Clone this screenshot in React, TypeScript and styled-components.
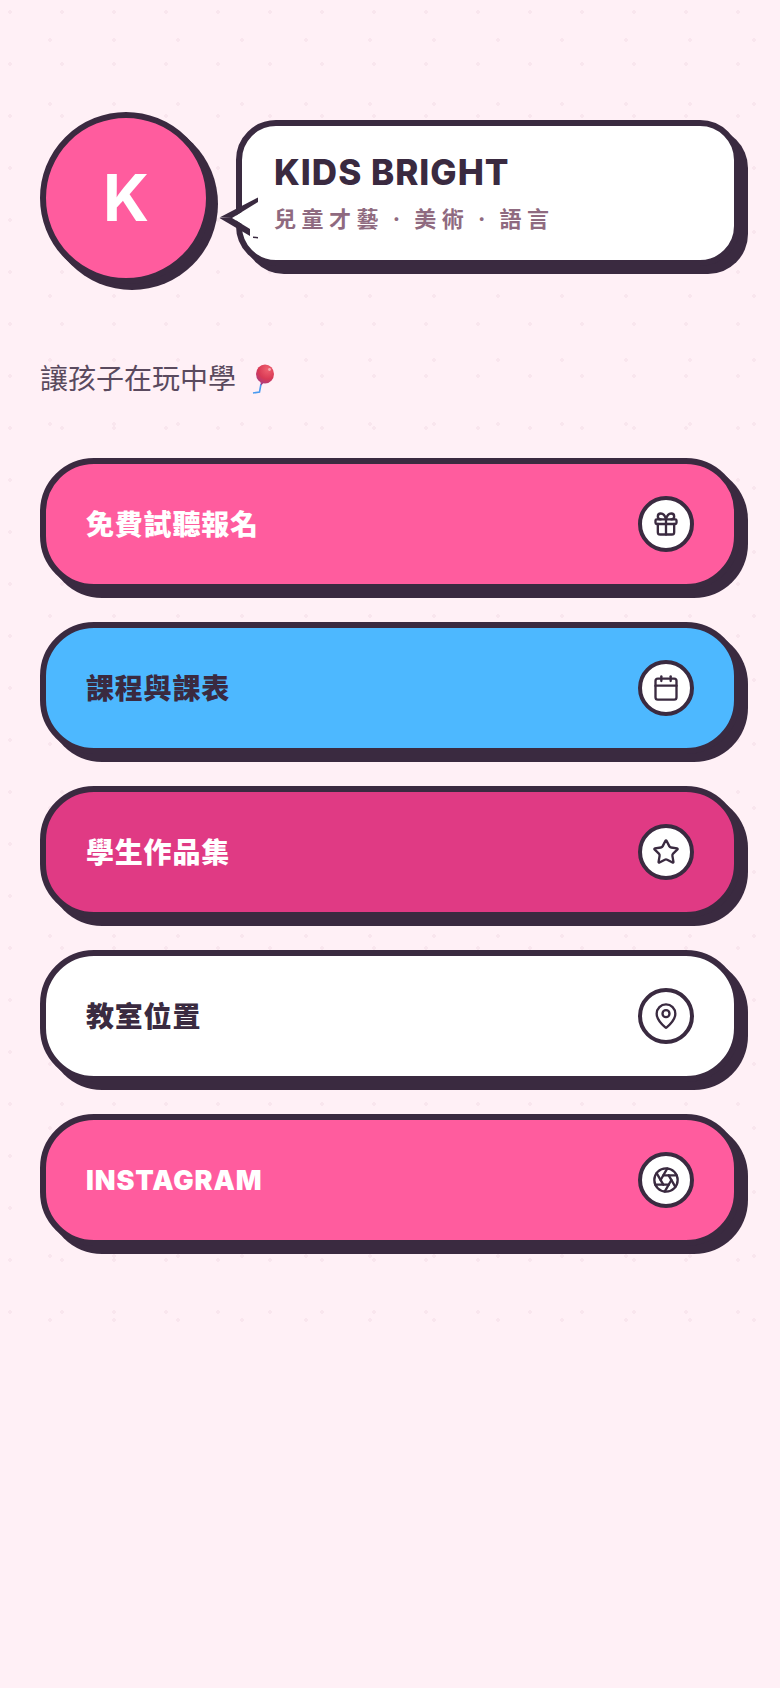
import React from "react";
import styled, { createGlobalStyle } from "styled-components";
import { Gift, Calendar, Star, MapPin, Aperture } from "lucide-react";

const DARK = "#3a2a40";

const GlobalStyle = createGlobalStyle`
  html, body {
    margin: 0;
    padding: 0;
    min-height: 1688px;
    background: #fff0f6;
  }
`;

const links = [
  { label: "免費試聽報名", bg: "#ff5c9e", color: "#ffffff", Icon: Gift },
  { label: "課程與課表", bg: "#4db8ff", color: DARK, Icon: Calendar },
  { label: "學生作品集", bg: "#e03a84", color: "#ffffff", Icon: Star },
  { label: "教室位置", bg: "#ffffff", color: DARK, Icon: MapPin },
  { label: "INSTAGRAM", bg: "#ff5c9e", color: "#ffffff", Icon: Aperture, latin: true },
];

export default function App() {
  return (
    <Page>
      <GlobalStyle />
      <Header>
        <Avatar>K</Avatar>
        <Bubble>
          <Tail width="40" height="44" viewBox="0 0 40 44">
            <polygon points="14,22 40,6 40,40 32,33" fill="#ffffff" />
            <polygon points="1.5,21.5 40,1.5 40,6 14,22" fill={DARK} />
            <polygon points="1.5,22 14,22 32,33 32,40" fill={DARK} />
            <polygon points="35,40.5 40,41 40,42.5 35,42" fill={DARK} />
          </Tail>
          <Title>KIDS BRIGHT</Title>
          <Subtitle>兒童才藝 · 美術 · 語言</Subtitle>
        </Bubble>
      </Header>

      <Tagline>
        讓孩子在玩中學
        <Balloon width="24" height="30" viewBox="0 0 24 30">
          <defs>
            <radialGradient id="balloon" cx="0.65" cy="0.25" r="0.85">
              <stop offset="0" stopColor="#f0606f" />
              <stop offset="0.6" stopColor="#d93a55" />
              <stop offset="1" stopColor="#a83a80" />
            </radialGradient>
          </defs>
          <path d="M9 20 L7.5 28 L1 29" fill="none" stroke="#4a9bf0" strokeWidth="1.6" />
          <ellipse cx="13" cy="10" rx="9" ry="9.6" fill="url(#balloon)" />
          <path d="M8.5 18 L11.5 19 L9 21.5 Z" fill="#a83a80" />
          <circle cx="17.5" cy="5.5" r="1.4" fill="#f7a8b0" />
        </Balloon>
      </Tagline>

      <LinkList>
        {links.map(({ label, bg, color, Icon, latin }) => (
          <LinkButton key={label} $bg={bg} $color={color}>
            <Label $latin={latin}>{label}</Label>
            <IconCircle>
              <Icon size={28} strokeWidth={2} />
            </IconCircle>
          </LinkButton>
        ))}
      </LinkList>
    </Page>
  );
}

const Page = styled.div`
  box-sizing: border-box;
  width: 780px;
  padding: 112px 40px 80px;
  font-family: "Noto Sans CJK TC", sans-serif;
  background-color: #fff0f6;
  background-image:
    radial-gradient(circle, #f9e6ee 1.6px, transparent 2px),
    radial-gradient(circle, #f9e6ee 1.6px, transparent 2px);
  background-size: 52px 52px, 64px 64px;
  background-position: -16px -14px, 18px 8px;
  background-repeat: repeat;
`;

const Header = styled.header`
  display: flex;
  align-items: flex-start;
  gap: 24px;
`;

const Avatar = styled.div`
  box-sizing: border-box;
  flex: none;
  display: flex;
  align-items: center;
  justify-content: center;
  width: 172px;
  height: 172px;
  padding-bottom: 2px;
  border: 6px solid ${DARK};
  border-radius: 50%;
  background: #ff5c9e;
  box-shadow: 6px 6px 0 ${DARK};
  color: #ffffff;
  font-family: Inter, sans-serif;
  font-size: 64px;
  font-weight: 700;
`;

const Bubble = styled.div`
  box-sizing: border-box;
  position: relative;
  flex: 1;
  height: 146px;
  margin-top: 8px;
  padding: 24px 32px;
  border: 6px solid ${DARK};
  border-radius: 40px;
  background: #ffffff;
  box-shadow: 8px 8px 0 ${DARK};
`;

const Tail = styled.svg`
  position: absolute;
  left: -24px;
  top: 70px;
`;

const Title = styled.div`
  color: ${DARK};
  font-family: Inter, sans-serif;
  font-size: 35px;
  font-weight: 800;
  line-height: 44px;
  letter-spacing: 1px;
`;

const Subtitle = styled.div`
  margin-top: 9px;
  color: #8f6a80;
  font-family: Inter, "Noto Sans CJK TC", sans-serif;
  font-size: 22px;
  font-weight: 700;
  line-height: 32px;
  letter-spacing: 5.5px;
  word-spacing: -2px;
`;

const Tagline = styled.div`
  display: flex;
  align-items: center;
  gap: 16px;
  margin-top: 73px;
  color: #5a4a5e;
  font-size: 28px;
  font-weight: 400;
  line-height: 40px;
`;

const Balloon = styled.svg`
  flex: none;
  margin-top: 4px;
`;

const LinkList = styled.nav`
  display: flex;
  flex-direction: column;
  gap: 32px;
  margin-top: 61px;
`;

const LinkButton = styled.a<{ $bg: string; $color: string }>`
  box-sizing: border-box;
  display: flex;
  align-items: center;
  justify-content: space-between;
  height: 132px;
  padding: 0 40px;
  border: 6px solid ${DARK};
  border-radius: 54px;
  background: ${({ $bg }) => $bg};
  box-shadow: 8px 8px 0 ${DARK};
  color: ${({ $color }) => $color};
`;

const Label = styled.span<{ $latin?: boolean }>`
  margin-bottom: ${({ $latin }) => ($latin ? "0" : "2px")};
  font-family: Inter, "Noto Sans CJK TC", sans-serif;
  font-size: ${({ $latin }) => ($latin ? "27px" : "28px")};
  font-weight: 900;
  letter-spacing: ${({ $latin }) => ($latin ? "0.9px" : "0.8px")};
`;

const IconCircle = styled.div`
  box-sizing: border-box;
  display: flex;
  align-items: center;
  justify-content: center;
  width: 56px;
  height: 56px;
  border: 4px solid ${DARK};
  border-radius: 50%;
  background: #ffffff;
  color: ${DARK};
`;
